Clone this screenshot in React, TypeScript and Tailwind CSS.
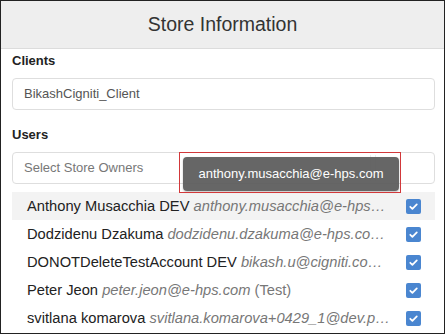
import React from 'react';

interface Owner {
  name: string;
  email: string;
  note?: string;
}

// emails are shown as the list clips them in the reference
const owners: Owner[] = [
  { name: 'Anthony Musacchia DEV', email: 'anthony.musacchia@e-hps…' },
  { name: 'Dodzidenu Dzakuma', email: 'dodzidenu.dzakuma@e-hps.co…' },
  { name: 'DONOTDeleteTestAccount DEV', email: 'bikash.u@cigniti.co…' },
  { name: 'Peter Jeon', email: 'peter.jeon@e-hps.com', note: '(Test)' },
  { name: 'svitlana komarova', email: 'svitlana.komarova+0429_1@dev.p…' },
];

const CheckBox = () => (
  <span className="flex h-[15px] w-[15px] shrink-0 items-center justify-center rounded-[2px] bg-[#4a86d0]">
    <svg width="11" height="11" viewBox="0 0 12 12" fill="none">
      <path d="M2.5 6.3l2.3 2.3L9.6 3.6" stroke="#fff" strokeWidth="1.9" strokeLinecap="round" strokeLinejoin="round" />
    </svg>
  </span>
);

export default function App() {
  return (
    <div className="relative h-[334px] w-[445px] overflow-hidden border border-[#222] bg-white font-['Liberation_Sans',Arial,sans-serif]">
      {/* Header */}
      <div className="flex h-[48px] items-center justify-center border-b border-[#dcdcdc] bg-[#eeeeee] text-[19.5px] text-[#333]">
        Store Information
      </div>

      <div className="pl-[11px] pr-[9px]">
        <div className="mt-[4px] text-[13px] font-bold leading-[15px] text-[#222]">Clients</div>
        <div className="mt-[10px] flex h-[32px] items-center rounded-[4px] border border-[#dedede] bg-white pl-[11px] text-[13px] text-[#555]">
          BikashCigniti_Client
        </div>

        <div className="mt-[17px] text-[13px] font-bold leading-[15px] text-[#222]">Users</div>
        <div className="mt-[10px] flex h-[32px] items-center rounded-[4px] border border-[#dedede] bg-white pl-[11px] text-[13px] text-[#777]">
          <span className="flex-1">Select Store Owners</span>
          <span className="h-[26px] w-px bg-[#eeeeee]" />
          <span className="w-[4px]" />
          <span className="h-[26px] w-px bg-[#eeeeee]" />
          <span className="w-[58px]" />
        </div>

        {/* Owner list */}
        <div className="mt-[8px]">
          {owners.map((o, i) => (
            <div
              key={o.name}
              className={`flex h-[28px] items-center gap-[12px] pl-[15px] pr-[14px] text-[14.7px] ${
                i === 0 ? 'bg-[#f3f3f3]' : ''
              }`}
            >
              <span className="min-w-0 flex-1 whitespace-nowrap text-[#222]">
                {o.name} <span className="italic text-[#777]">{o.email}</span>
                {o.note && <span className="text-[#777]"> {o.note}</span>}
              </span>
              <CheckBox />
            </div>
          ))}
        </div>
      </div>

      {/* Tooltip */}
      <div className="absolute left-[182px] top-[156px] flex h-[34px] w-[216px] items-center justify-center rounded-[4px] bg-[rgba(90,90,90,0.93)] text-[13px] text-white shadow-[0_1px_2px_rgba(0,0,0,0.25)]">
        anthony.musacchia@e-hps.com
      </div>
      {/* Highlight box */}
      <div className="pointer-events-none absolute left-[178px] top-[151px] h-[41px] w-[222px] border border-[#d2383a]" />
    </div>
  );
}
